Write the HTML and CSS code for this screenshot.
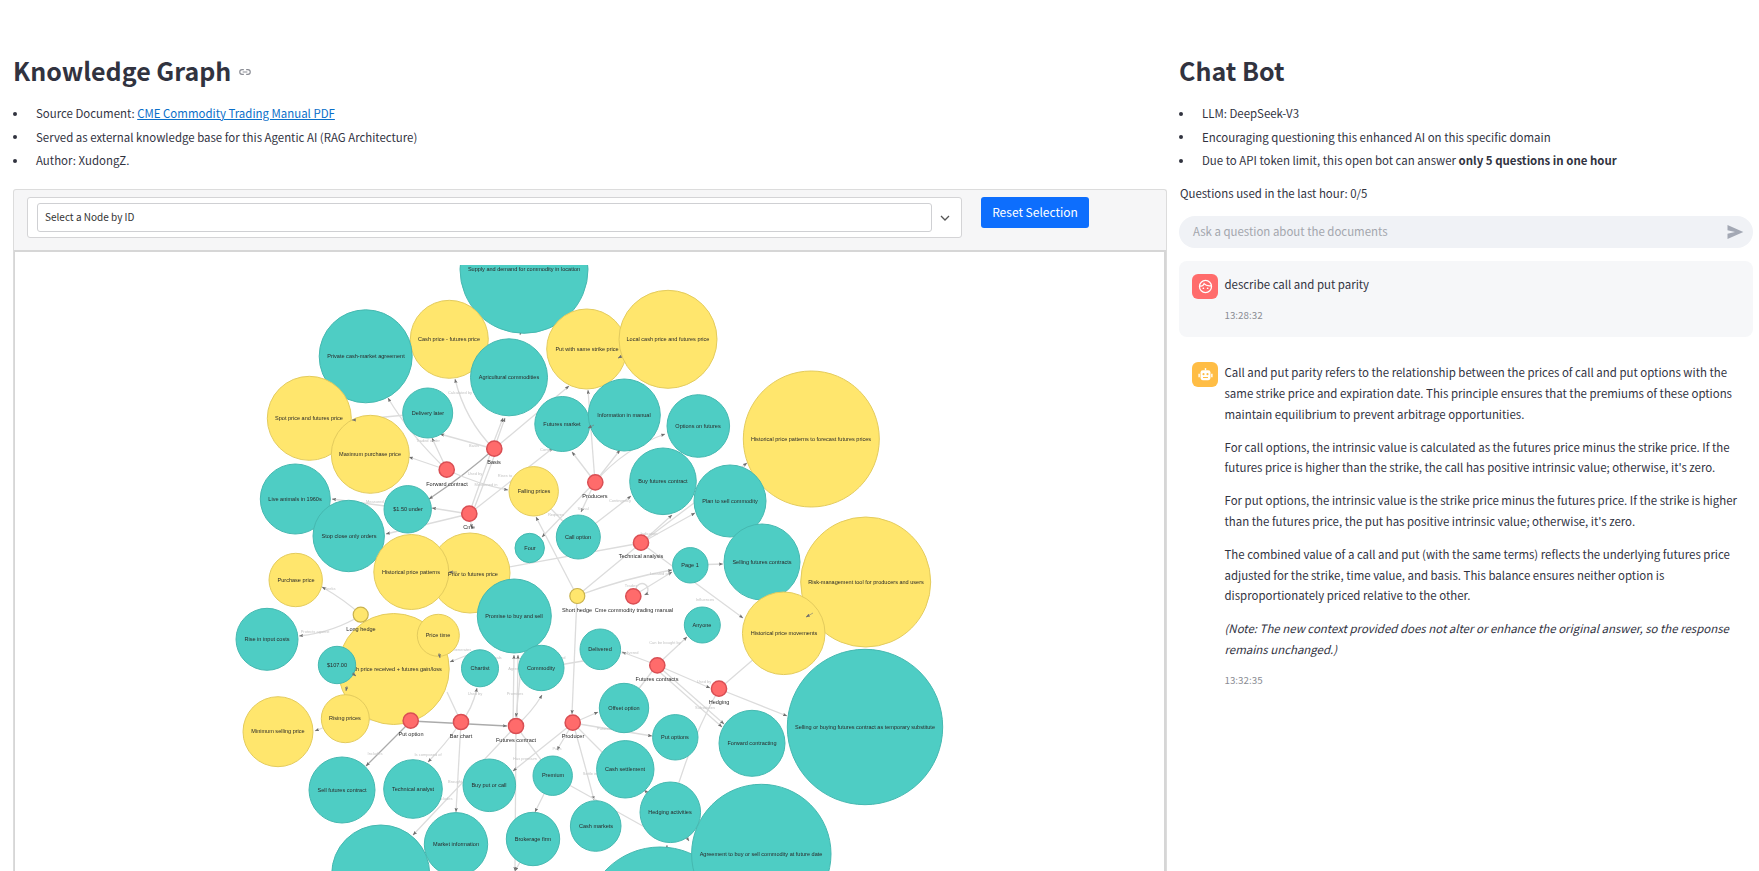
FILE: index.html
```html
<!DOCTYPE html>
<html lang="en">
<head>
<meta charset="utf-8">
<title>Knowledge Graph</title>
<link rel="stylesheet" href="styles.css">
</head>
<body>
<main class="app">
  <section class="col-left">
    <h2 class="title">Knowledge Graph
      <svg class="anchor" viewBox="0 0 24 24" width="14" height="14"><path d="M10 8H7a4 4 0 0 0 0 8h3M14 8h3a4 4 0 0 1 0 8h-3M8 12h8"/></svg>
    </h2>
    <ul class="bullets">
      <li><span>Source Document: <a href="#">CME Commodity Trading Manual PDF</a></span></li>
      <li><span>Served as external knowledge base for this Agentic AI (RAG Architecture)</span></li>
      <li><span>Author: XudongZ.</span></li>
    </ul>
    <div class="panel">
      <div class="toolbar">
        <div class="select-wrap">
          <div class="select-input">Select a Node by ID</div>
          <svg class="chevron" viewBox="0 0 10 6" width="10" height="6"><path d="M1 1l4 4 4-4"/></svg>
        </div>
        <button class="reset" type="button">Reset Selection</button>
      </div>
      <div class="graph">
        <svg class="graph-svg" viewBox="15 252 1150 619" preserveAspectRatio="xMinYMin slice">
          <defs>
            <marker id="arrow" viewBox="0 0 8 6" refX="7.5" refY="3" markerUnits="userSpaceOnUse" markerWidth="4.500" markerHeight="3.400" orient="auto"><path class="arrow-head" d="M0 0L8 3L0 6L1.5 3z"/></marker>
            <clipPath id="canvas"><rect x="15" y="265" width="1150" height="606"/></clipPath>
          </defs>
          <g clip-path="url(#canvas)">
            <g class="edges">
              <path d="M524 320L520 335"/>
              <path d="M494 449Q465 420 455 379"/>
              <path d="M494 449L505 418"/>
              <path d="M491 449L503 418"/>
              <path d="M494 449L569 386"/>
              <path class="dark" d="M494 449Q465 475 429 499"/>
              <path d="M494 449L440 434"/>
              <path d="M447 470Q410 435 388 398"/>
              <path d="M447 470L432 438"/>
              <path d="M447 470L409 457"/>
              <path d="M447 470Q480 485 508 490"/>
              <path d="M427 413L353 420"/>
              <path d="M469 514L492 449"/>
              <path d="M472 514L497 449"/>
              <path d="M469 514L472 528"/>
              <path d="M469 514L386 534"/>
              <path d="M469 514L432 508"/>
              <path d="M469 514L553 448"/>
              <path d="M408 509L332 499"/>
              <path d="M595 482L572 452"/>
              <path d="M595 482L588 390"/>
              <path d="M595 482L620 450"/>
              <path d="M595 482Q625 448 665 434"/>
              <path d="M595 482L581 512"/>
              <path d="M595 482L542 537"/>
              <path d="M577 596L536 517"/>
              <path d="M534 491L578 537"/>
              <path d="M578 537L631 496"/>
              <path d="M470 574L641 543"/>
              <path d="M641 543L695 513"/>
              <path d="M641 543L672 515"/>
              <path d="M641 543L747 463"/>
              <path d="M641 543L577 596"/>
              <path d="M641 543L743 618"/>
              <path d="M361 615Q345 600 322 587"/>
              <path d="M361 615Q335 632 299 636"/>
              <path d="M337 665L356 676"/>
              <path d="M345 719L346 691"/>
              <path d="M438 635L440 658"/>
              <path d="M480 650L450 662"/>
              <path d="M447 692L461 722"/>
              <path d="M345 719L411 721"/>
              <path d="M345 719L315 731"/>
              <path d="M461 722Q472 710 477 688"/>
              <path class="dark" d="M411 721L366 766"/>
              <path class="dark" d="M411 721L507 726"/>
              <path d="M461 722Q445 745 428 762"/>
              <path d="M461 722L456 812"/>
              <path d="M513 726L514 655"/>
              <path d="M517 726L518 655"/>
              <path d="M521 668L516 717"/>
              <path d="M516 726Q532 712 542 695"/>
              <path d="M516 726L515 871"/>
              <path d="M516 726L413 835"/>
              <path d="M573 723L513 771"/>
              <path d="M573 723L557 750"/>
              <path d="M553 776L535 812"/>
              <path d="M573 723Q585 765 594 800"/>
              <path d="M573 723L598 712"/>
              <path d="M573 723L652 736"/>
              <path d="M516 726L553 776"/>
              <path d="M573 723L640 790"/>
              <path d="M541 668L601 658"/>
              <path d="M577 596L572 714"/>
              <path d="M577 596Q625 578 672 570"/>
              <path d="M690 565L723 564"/>
              <path d="M633 596L672 572"/>
              <path d="M636 589a6 6 0 1 1 8.500 6"/>
              <path d="M657 665L687 637"/>
              <path d="M657 665L622 652"/>
              <path d="M657 665L710 688"/>
              <path d="M657 665L724 724"/>
              <path d="M655 668L722 727"/>
              <path d="M657 665L624 708"/>
              <path d="M719 689L787 716"/>
              <path d="M719 689L784 633"/>
              <path d="M719 689Q690 740 670 812"/>
              <path d="M670 812L644 790"/>
              <path d="M670 812L689 841"/>
              <path d="M665 880L667 845"/>
              <path d="M553 776L650 830"/>
              <path d="M533 839L515 871"/>
            </g>
            <g class="edge-labels">
              <text x="460" y="394">Calculated by</text>
              <text x="428" y="442">Traded under</text>
              <text x="474" y="447">Basis</text>
              <text x="475" y="475">Used by</text>
              <text x="486" y="486">Mentioned in</text>
              <text x="548" y="451">Contains</text>
              <text x="583" y="510">Signal</text>
              <text x="620" y="502">Contingency</text>
              <text x="649" y="535">Indication</text>
              <text x="377" y="503">Measured in</text>
              <text x="505" y="477">Rises to</text>
              <text x="556" y="516">Requires</text>
              <text x="330" y="590">Seeks</text>
              <text x="315" y="633">Protects against</text>
              <text x="462" y="651">Generates</text>
              <text x="495" y="659">Signals</text>
              <text x="475" y="695">Used by</text>
              <text x="375" y="755">Includes</text>
              <text x="428" y="756">Is composed of</text>
              <text x="455" y="783">Brought</text>
              <text x="445" y="800">Includes</text>
              <text x="515" y="695">Promises</text>
              <text x="518" y="670">Agreement</text>
              <text x="557" y="659">Delivered</text>
              <text x="525" y="760">Has premium</text>
              <text x="557" y="750">Pays</text>
              <text x="590" y="775">Settle in</text>
              <text x="604" y="730">Futures</text>
              <text x="665" y="644">Can be bought by</text>
              <text x="704" y="683">Used by</text>
              <text x="705" y="709">Substitutes</text>
              <text x="705" y="601">Influences</text>
              <text x="631" y="587">Trades</text>
              <text x="630" y="654">Delivered</text>
              <text x="660" y="575">Located on</text>
            </g>
            <g class="nodes">
              <circle class="teal" cx="524" cy="269.300" r="64"/>
              <circle class="yellow" cx="449.300" cy="339.300" r="39"/>
              <circle class="teal" cx="365.700" cy="356.300" r="46.500"/>
              <circle class="teal" cx="509" cy="377.300" r="38.500"/>
              <circle class="yellow" cx="586.700" cy="349" r="40"/>
              <circle class="yellow" cx="668" cy="339.300" r="49"/>
              <circle class="teal" cx="427.700" cy="413" r="25"/>
              <circle class="yellow" cx="309.300" cy="418.300" r="42"/>
              <circle class="yellow" cx="370.300" cy="454.300" r="39"/>
              <circle class="teal" cx="562.300" cy="424" r="27.500"/>
              <circle class="teal" cx="624.300" cy="415" r="36"/>
              <circle class="teal" cx="698.300" cy="426" r="31.300"/>
              <circle class="yellow" cx="811.300" cy="439" r="68"/>
              <circle class="teal" cx="663" cy="481.300" r="33.300"/>
              <circle class="teal" cx="730" cy="501" r="36"/>
              <circle class="teal" cx="295.300" cy="499" r="35"/>
              <circle class="teal" cx="348.700" cy="536" r="35.700"/>
              <circle class="teal" cx="407.700" cy="509.300" r="23.700"/>
              <circle class="yellow" cx="533.700" cy="491.300" r="24.700"/>
              <circle class="teal" cx="578.300" cy="537" r="22"/>
              <circle class="teal" cx="529.700" cy="548" r="14.700"/>
              <circle class="yellow" cx="470" cy="573" r="40"/>
              <circle class="yellow" cx="411.300" cy="572" r="37.500"/>
              <circle class="yellow" cx="295.700" cy="580" r="26.700"/>
              <circle class="teal" cx="514.300" cy="616" r="37"/>
              <circle class="teal" cx="267" cy="639.300" r="31"/>
              <circle class="yellow" cx="393.700" cy="669" r="55.500"/>
              <text class="inline-label" x="394" y="669.600">Cash price received + futures gain/loss</text>
              <circle class="yellow" cx="438.300" cy="635.300" r="21"/>
              <circle class="teal" cx="337" cy="665" r="18.700"/>
              <circle class="teal" cx="480" cy="668.300" r="18.500"/>
              <circle class="teal" cx="541.300" cy="668" r="22.700"/>
              <circle class="teal" cx="600.300" cy="649.300" r="20.300"/>
              <circle class="yellow" cx="345.300" cy="718.700" r="24"/>
              <circle class="yellow" cx="278" cy="731.700" r="35"/>
              <circle class="teal" cx="342" cy="790" r="33"/>
              <circle class="teal" cx="413" cy="789" r="29.300"/>
              <circle class="teal" cx="489.300" cy="785.300" r="26.300"/>
              <circle class="teal" cx="552.700" cy="775.700" r="19.700"/>
              <circle class="teal" cx="595.700" cy="826" r="25.300"/>
              <circle class="teal" cx="533" cy="839" r="26.700"/>
              <circle class="teal" cx="380.700" cy="874" r="49"/>
              <circle class="teal" cx="456" cy="844.300" r="31.700"/>
              <circle class="teal" cx="690.300" cy="565.300" r="17.700"/>
              <circle class="teal" cx="762" cy="562" r="38"/>
              <circle class="yellow" cx="865.700" cy="582" r="65"/>
              <circle class="yellow" cx="783.700" cy="633.300" r="41.300"/>
              <circle class="teal" cx="702.300" cy="625" r="18"/>
              <circle class="teal" cx="624" cy="708" r="24.700"/>
              <circle class="teal" cx="675.300" cy="737.300" r="22.700"/>
              <circle class="teal" cx="752" cy="743.300" r="33"/>
              <circle class="teal" cx="865" cy="727" r="77.700"/>
              <circle class="teal" cx="625.300" cy="769.300" r="28.700"/>
              <circle class="teal" cx="660" cy="922" r="75"/>
              <circle class="teal" cx="670.300" cy="812.300" r="30.300"/>
              <circle class="teal" cx="761.300" cy="854" r="69.700"/>
              <circle class="hub-y" cx="360.700" cy="614.700" r="7.500"/>
              <circle class="hub-y" cx="577.300" cy="596" r="7.500"/>
              <circle class="hub" cx="494.300" cy="448.700" r="7.600"/>
              <circle class="hub" cx="446.700" cy="469.700" r="7.600"/>
              <circle class="hub" cx="595.300" cy="482.300" r="7.600"/>
              <circle class="hub" cx="469.300" cy="513.700" r="7.600"/>
              <circle class="hub" cx="641" cy="542.700" r="7.600"/>
              <circle class="hub" cx="410.700" cy="720.700" r="7.600"/>
              <circle class="hub" cx="461" cy="722" r="7.600"/>
              <circle class="hub" cx="516" cy="726" r="7.600"/>
              <circle class="hub" cx="572.700" cy="722.700" r="7.600"/>
              <circle class="hub" cx="633.300" cy="596.300" r="7.600"/>
              <circle class="hub" cx="657.300" cy="665.300" r="7.600"/>
              <circle class="hub" cx="719" cy="688.700" r="7.600"/>
            </g>
            <g class="edges over">
              <path d="M622 356L618 358"/>
              <path d="M457 572L449 572"/>
              <path d="M594 425L588 428"/>
              <path d="M352 673L356 676"/>
              <path d="M439 653L440 658"/>
              <path d="M813 613L806 617"/>
              <path d="M347 686L346 691"/>
              <path d="M356 420L352 420"/>
            </g>
            <g class="labels">
              <text x="524" y="269">Supply and demand for commodity in location</text>
              <text x="449" y="339">Cash price - futures price</text>
              <text x="366" y="356">Private cash-market agreement</text>
              <text x="509" y="377">Agricultural commodities</text>
              <text x="587" y="349">Put with same strike price</text>
              <text x="668" y="339">Local cash price and futures price</text>
              <text x="428" y="413">Delivery later</text>
              <text x="309" y="418">Spot price and futures price</text>
              <text x="370" y="454">Maximum purchase price</text>
              <text x="562" y="424">Futures market</text>
              <text x="624" y="415">Information in manual</text>
              <text x="698" y="426">Options on futures</text>
              <text x="811" y="439">Historical price patterns to forecast futures prices</text>
              <text x="663" y="481">Buy futures contract</text>
              <text x="730" y="501">Plan to sell commodity</text>
              <text x="295" y="499">Live animals in 1960s</text>
              <text x="349" y="536">Stop close only orders</text>
              <text x="408" y="509">$1.50 under</text>
              <text x="534" y="491">Falling prices</text>
              <text x="578" y="537">Call option</text>
              <text x="530" y="548">Four</text>
              <text x="411" y="572">Historical price patterns</text>
              <text x="473" y="574">Prior to futures price</text>
              <text x="296" y="580">Purchase price</text>
              <text x="514" y="616">Promise to buy and sell</text>
              <text x="267" y="639">Rise in input costs</text>
              <text x="438" y="635">Price time</text>
              <text x="337" y="665">$107.00</text>
              <text x="480" y="668">Chartist</text>
              <text x="541" y="668">Commodity</text>
              <text x="600" y="649">Delivered</text>
              <text x="345" y="718">Rising prices</text>
              <text x="278" y="731">Minimum selling price</text>
              <text x="342" y="790">Sell futures contract</text>
              <text x="413" y="789">Technical analyst</text>
              <text x="489" y="785">Buy put or call</text>
              <text x="553" y="775">Premium</text>
              <text x="596" y="826">Cash markets</text>
              <text x="533" y="839">Brokerage firm</text>
              <text x="456" y="844">Market information</text>
              <text x="690" y="565">Page 1</text>
              <text x="762" y="562">Selling futures contracts</text>
              <text x="866" y="582">Risk-management tool for producers and users</text>
              <text x="784" y="633">Historical price movements</text>
              <text x="702" y="625">Anyone</text>
              <text x="624" y="708">Offset option</text>
              <text x="675" y="737">Put options</text>
              <text x="752" y="743">Forward contracting</text>
              <text x="865" y="727">Selling or buying futures contract as temporary substitute</text>
              <text x="625" y="769">Cash settlement</text>
              <text x="670" y="812">Hedging activities</text>
              <text x="761" y="854">Agreement to buy or sell commodity at future date</text>
              <text x="494" y="462">Basis</text>
              <text x="447" y="484">Forward contract</text>
              <text x="595" y="496">Producers</text>
              <text x="469" y="527">Cme</text>
              <text x="641" y="556">Technical analysis</text>
              <text x="361" y="629">Long hedge</text>
              <text x="577" y="610">Short hedge</text>
              <text x="634" y="610">Cme commodity trading manual</text>
              <text x="411" y="734">Put option</text>
              <text x="461" y="736">Bar chart</text>
              <text x="516" y="740">Futures contract</text>
              <text x="573" y="736">Producer</text>
              <text x="657" y="679">Futures contracts</text>
              <text x="719" y="702">Hedging</text>
            </g>
          </g>
        </svg>
      </div>
    </div>
  </section>
  <section class="col-right">
    <h2 class="title">Chat Bot</h2>
    <ul class="bullets">
      <li><span>LLM: DeepSeek-V3</span></li>
      <li><span>Encouraging questioning this enhanced AI on this specific domain</span></li>
      <li><span>Due to API token limit, this open bot can answer <strong>only 5 questions in one hour</strong></span></li>
    </ul>
    <p class="usage">Questions used in the last hour: 0/5</p>
    <div class="chat-input">
      <span class="placeholder">Ask a question about the documents</span>
      <svg class="send" viewBox="0 0 24 24" width="20" height="20"><path d="M3 20.500V14l9-2-9-2V3.500L22 12z"/></svg>
    </div>
    <article class="msg msg-user">
      <div class="avatar avatar-user">
        <svg viewBox="0 0 24 24" width="17" height="17"><circle cx="12" cy="12" r="8.500"/><path d="M4 11c3 1 5-.5 6-3 2 2.500 6 3.500 10 3"/><circle class="eye" cx="9" cy="14.500" r="1.200"/><circle class="eye" cx="15" cy="14.500" r="1.200"/></svg>
      </div>
      <div class="body">
        <p>describe call and put parity</p>
        <time>13:28:32</time>
      </div>
    </article>
    <article class="msg msg-bot">
      <div class="avatar avatar-bot">
        <svg viewBox="0 0 24 24" width="17" height="17"><path class="solid" d="M11 3h2v3h-2z"/><rect class="solid" x="5" y="6" width="14" height="14" rx="3"/><path class="solid" d="M2 11h2v5H2zM20 11h2v5h-2z"/><circle class="cut" cx="9.200" cy="11.500" r="1.500"/><circle class="cut" cx="14.800" cy="11.500" r="1.500"/><path class="cut" d="M8.500 15.500h7v1.500h-7z"/></svg>
      </div>
      <div class="body">
        <p>Call and put parity refers to the relationship between the prices of call and put options with the same strike price and expiration date. This principle ensures that the premiums of these options maintain equilibrium to prevent arbitrage opportunities.</p>
        <p>For call options, the intrinsic value is calculated as the futures price minus the strike price. If the futures price is higher than the strike, the call has positive intrinsic value; otherwise, it's zero.</p>
        <p>For put options, the intrinsic value is the strike price minus the futures price. If the strike is higher than the futures price, the put has positive intrinsic value; otherwise, it's zero.</p>
        <p>The combined value of a call and put (with the same terms) reflects the underlying futures price adjusted for the strike, time value, and basis. This balance ensures neither option is disproportionately priced relative to the other.</p>
        <p><em>(Note: The new context provided does not alter or enhance the original answer, so the response remains unchanged.)</em></p>
        <time>13:32:35</time>
      </div>
    </article>
  </section>
</main>
</body>
</html>
```

FILE: styles.css
```css
* { box-sizing: border-box; }
html, body { margin: 0; height: 871px; overflow: hidden; background: #fff; }
body {
  font-family: "Noto Sans CJK SC", "Source Sans Pro", "Lato", sans-serif;
  font-size: 11.450px;
  line-height: 21px;
  color: #31333f;
}
.app {
  display: grid;
  grid-template-columns: 1154px 574px;
  column-gap: 12px;
  padding-left: 13px;
  height: 871px;
}
.col-left, .col-right { display: flex; flex-direction: column; min-width: 0; }
.title {
  margin: 52px 0 0;
  height: 40px;
  padding-bottom: 3px;
  font-size: 25px;
  line-height: 37px;
  font-weight: 600;
  display: flex;
  align-items: center;
  gap: 7px;
}
.anchor { fill: none; stroke: #8a8c94; stroke-width: 2; margin-top: 3px; }
.bullets {
  list-style: none;
  margin: 11px 0 0;
  padding: 0;
  display: flex;
  flex-direction: column;
  gap: 2.500px;
}
.bullets li { display: flex; align-items: center; height: 21px; }
.bullets li::before {
  content: "";
  width: 4px;
  height: 4px;
  border-radius: 50%;
  background: #31333f;
  margin-right: 19px;
  flex: none;
}
.bullets a { color: #0a6fc9; }
.bullets strong { font-weight: 600; }

.panel {
  margin-top: 18px;
  flex: 1;
  min-height: 0;
  background: #f6f6f7;
  border: 1px solid #dcdcdc;
  border-bottom: 0;
  border-radius: 3px 3px 0 0;
  display: flex;
  flex-direction: column;
}
.toolbar {
  height: 60px;
  display: flex;
  align-items: flex-start;
  padding: 7px 0 0 13px;
  gap: 19px;
}
.select-wrap {
  width: 935px;
  height: 41px;
  background: #fff;
  border: 1px solid #d4d4d6;
  border-radius: 3px;
  display: flex;
  align-items: center;
  padding: 0 11px 0 9px;
  justify-content: space-between;
}
.select-input {
  width: 895px;
  height: 29px;
  border: 1px solid #cfd0d3;
  border-radius: 3px;
  font-size: 10px;
  line-height: 25px;
  padding-left: 7px;
  color: #333;
}
.chevron { fill: none; stroke: #555; stroke-width: 1.300; }
.reset {
  width: 108px;
  height: 31px;
  border: 0;
  border-radius: 3px;
  background: #0d6efd;
  color: #fff;
  font: 12px/29px "Noto Sans CJK SC", "Lato", sans-serif;
  padding: 0 0 2px;
}
.graph {
  flex: 1;
  min-height: 0;
  background: #fff;
  border: 2px solid #d6d6d6;
  border-bottom: 0;
  border-left-width: 1px;
  overflow: hidden;
}
.graph-svg { display: block; width: 1150px; height: 619px; filter: blur(0.3px); }
.edges path { fill: none; stroke: #dcdcdc; stroke-width: 1.300; marker-end: url(#arrow); }
.edges .dark { stroke: #ababab; }
.over path { stroke: #777; stroke-width: .6; }
.arrow-head { fill: #6e6e6e; }
.teal { fill: #4ecdc4; stroke: #45b8b0; stroke-width: 1; }
.yellow { fill: #ffe66d; stroke: #e3cb5d; stroke-width: 1; }
.hub { fill: #ff6b6b; stroke: #d94f54; stroke-width: 1.500; }
.hub-y { fill: #ffe66d; stroke: #c9b24d; stroke-width: 1.200; }
.labels { transform: translateY(.6px); }
.labels text, .inline-label {
  font-family: "Liberation Sans", Arial, sans-serif;
  font-size: 5.550px;
  fill: #2a2a2a;
  text-anchor: middle;
  dominant-baseline: middle;
}
.edge-labels text {
  font-family: "Liberation Sans", Arial, sans-serif;
  font-size: 4px;
  fill: #c4c4c4;
  text-anchor: middle;
}

.usage { margin: 12px 0 0 1px; }
.chat-input {
  margin-top: 11.500px;
  height: 32px;
  border-radius: 16px;
  background: #f0f2f6;
  display: flex;
  align-items: center;
  justify-content: space-between;
  padding: 0 8px 0 14px;
}
.placeholder { color: #a3a6ad; }
.send { fill: #a3a8b4; }
.msg { display: flex; gap: 6.500px; padding: 13px; border-radius: 8px; }
.msg-user { margin-top: 13px; background: #f6f7f9; padding-bottom: 15px; }
.msg-bot { margin-top: 12px; }
.avatar {
  flex: none;
  width: 26px;
  height: 25px;
  border-radius: 6px;
  display: flex;
  align-items: center;
  justify-content: center;
}
.avatar-user { background: #ff6c6c; }
.avatar-user svg { fill: none; stroke: #fff; stroke-width: 1.800; }
.avatar-user .eye { fill: #fff; stroke: none; }
.avatar-bot { background: #ffbd45; }
.avatar-bot .solid { fill: #fff; }
.avatar-bot .cut { fill: #ffbd45; }
.body { flex: 1; min-width: 0; padding-top: .5px; }
.body p { margin: 0 0 12.300px; line-height: 20.700px; }
.body time { display: block; font-size: 9.800px; line-height: 14px; color: #8b8d94; margin-top: 13px; }
.body p:last-of-type { margin-bottom: 0; }
```
